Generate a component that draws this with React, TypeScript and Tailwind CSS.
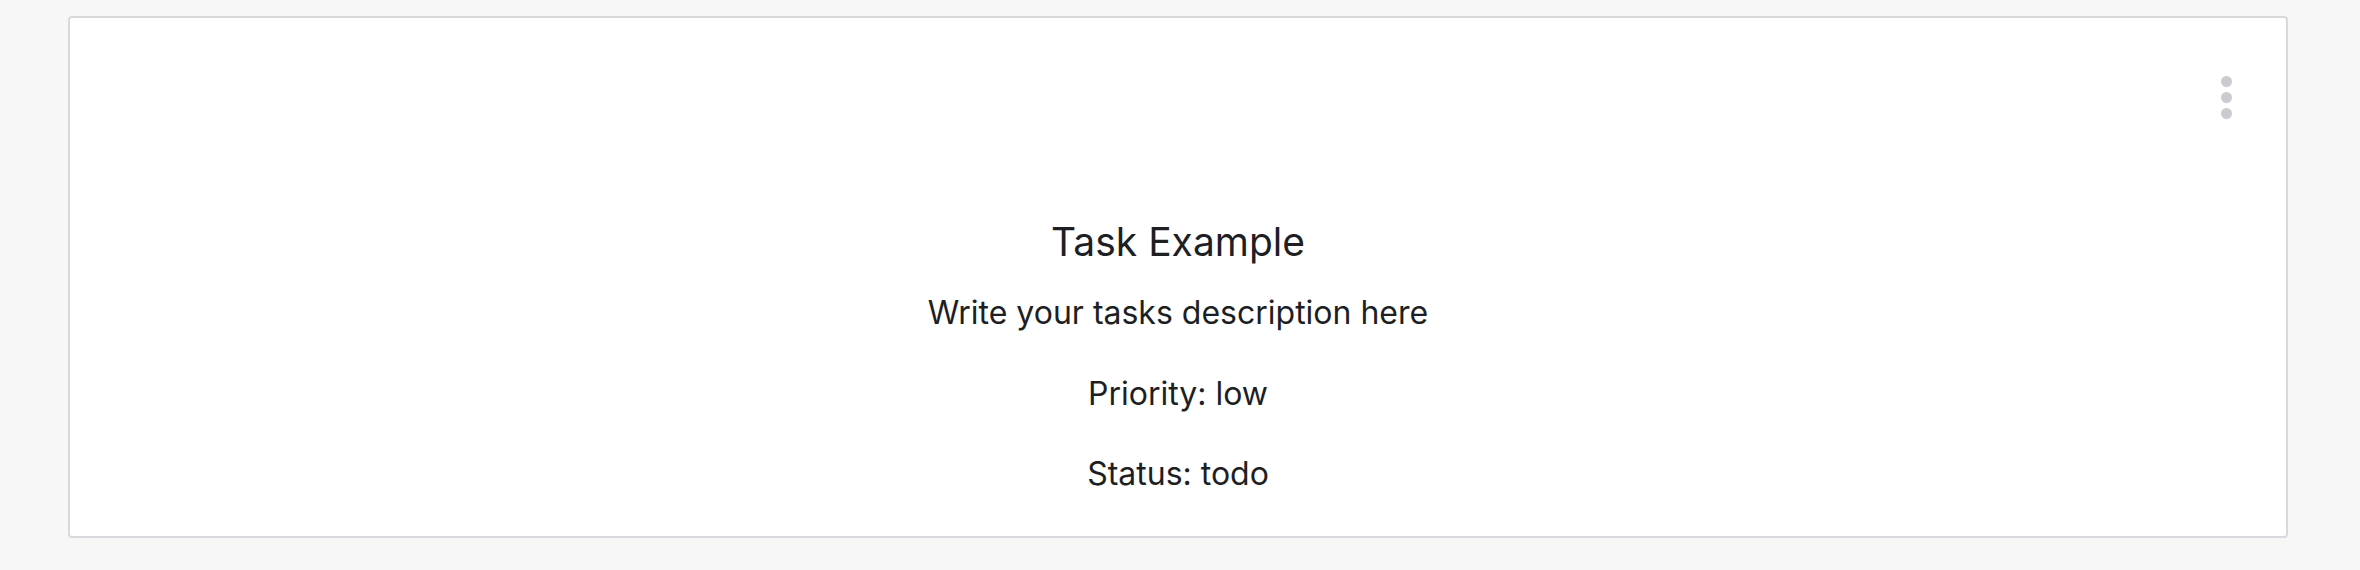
import React from 'react';

/**
 * Single task card, centered text with a kebab menu in the corner
 */
const TaskCard: React.FC = () => {
  return (
    <div className="relative ml-[68px] mt-[16px] flex h-[522px] w-[2220px] flex-col rounded-[4px] border-2 border-[#d9d8dd] bg-white pt-[200px] text-center text-[#1d1f24]">
      <button
        className="absolute right-[40px] top-[58px] flex w-10 flex-col items-center gap-[5px]"
        aria-label="Task options"
      >
        <span className="h-[11px] w-[11px] rounded-full bg-[#cccbd0]" />
        <span className="h-[11px] w-[11px] rounded-full bg-[#cccbd0]" />
        <span className="h-[11px] w-[11px] rounded-full bg-[#cccbd0]" />
      </button>
      <h2 className="text-[39px] leading-[48px] font-normal">Task Example</h2>
      <p className="mt-[28px] text-[32px] leading-[38px]">Write your tasks description here</p>
      <p className="mt-[43px] text-[32px] leading-[38px]">Priority: low</p>
      <p className="mt-[42px] text-[32px] leading-[38px]">Status: todo</p>
    </div>
  );
};

const App: React.FC = () => {
  return (
    <div className="h-[570px] w-full overflow-hidden bg-[#f7f7f7] pt-px font-['Inter','Liberation_Sans',sans-serif]">
      <div className="-mt-px">
        <TaskCard />
      </div>
    </div>
  );
};

export default App;
